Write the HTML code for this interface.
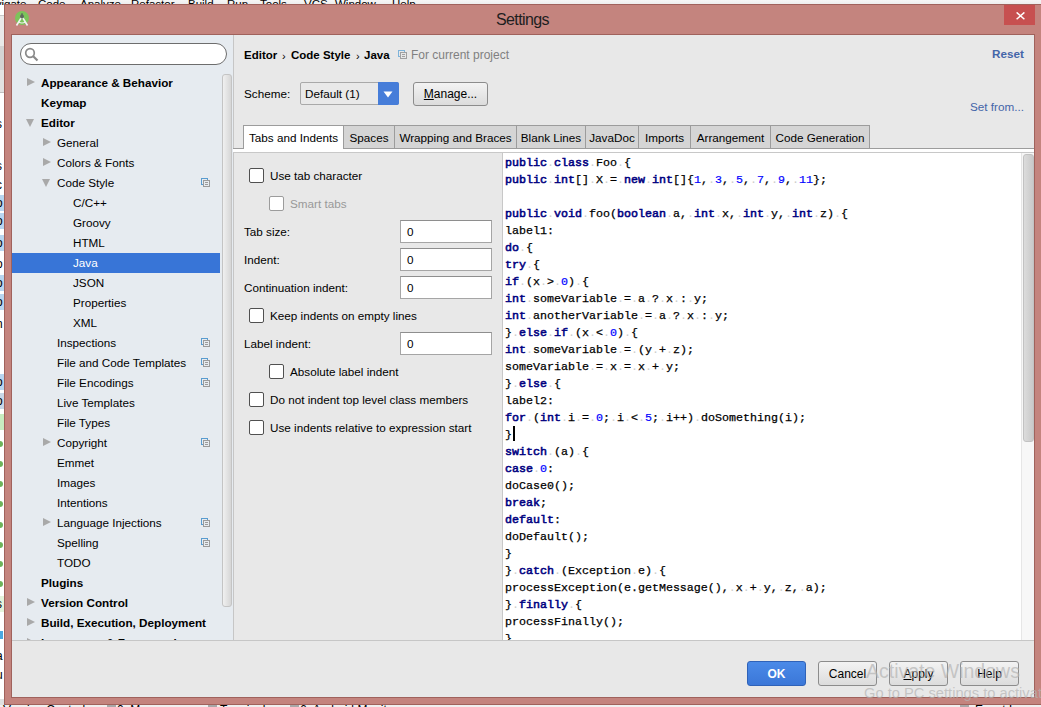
<!DOCTYPE html><html><head><meta charset="utf-8"><title>Settings</title><style>
*{margin:0;padding:0;box-sizing:border-box}
html,body{width:1041px;height:707px;overflow:hidden;background:#f0f0f0;font-family:"Liberation Sans",sans-serif;font-size:11.7px;color:#000}
.a{position:absolute;white-space:nowrap}
.tri-r{position:absolute;width:0;height:0;border-top:4.5px solid transparent;border-bottom:4.5px solid transparent;border-left:8px solid #a9a9a9}
.tri-d{position:absolute;width:0;height:0;border-left:4.5px solid transparent;border-right:4.5px solid transparent;border-top:8px solid #a9a9a9}
.row{position:absolute;height:20px;line-height:20px;white-space:nowrap}
.cb{position:absolute;width:15px;height:15px;border:1px solid #505050;border-radius:2px;background:#fff}
.cbd{border-color:#9c9c9c;background:#fff}
.tf{position:absolute;left:400px;width:92px;height:23px;border:1px solid #a5a5a5;border-top-color:#8e8e8e;background:#fff;padding-left:6px;line-height:21px}
.tab{position:absolute;top:125px;height:24px;border:1px solid #9c9c9c;border-bottom:none;background:#d5d5d5;line-height:23px;text-align:center}
.btn{position:absolute;top:661px;width:59px;height:25px;border:1px solid #8c8c8c;border-radius:3px;background:linear-gradient(#f3f3f3,#dcdcdc);text-align:center;line-height:24px;font-size:12px}
pre{position:absolute;font-family:"Liberation Mono",monospace;font-size:11.67px;line-height:17px;color:#000;-webkit-text-stroke:0.25px #000}
.k{color:#000080;font-weight:normal;-webkit-text-stroke:0.55px #000080}
.n{color:#0000ff;-webkit-text-stroke:0.2px #0000ff}
.w{color:#cccccc;font-weight:normal;-webkit-text-stroke:0}
.ic{position:absolute;width:10px;height:10px}
</style></head><body>
<div class="a" style="left:0;top:0;width:1041px;height:6px;background:linear-gradient(#f6f6f6,#e9e9e9)"></div>
<div class="a" style="left:-19px;top:-2px;font-size:11.5px">Navigate</div>
<div class="a" style="left:38px;top:-2px;font-size:11.5px">Code</div>
<div class="a" style="left:80px;top:-2px;font-size:11.5px">Analyze</div>
<div class="a" style="left:131px;top:-2px;font-size:11.5px">Refactor</div>
<div class="a" style="left:188px;top:-2px;font-size:11.5px">Build</div>
<div class="a" style="left:227px;top:-2px;font-size:11.5px">Run</div>
<div class="a" style="left:260px;top:-2px;font-size:11.5px">Tools</div>
<div class="a" style="left:304px;top:-2px;font-size:11.5px">VCS</div>
<div class="a" style="left:335px;top:-2px;font-size:11.5px">Window</div>
<div class="a" style="left:392px;top:-2px;font-size:11.5px">Help</div>
<div class="a" style="left:0;top:5px;width:5px;height:700px;background:#fff"></div>
<div class="a" style="left:0;top:15px;width:5px;height:1px;background:#c8c8c8"></div>
<div class="a" style="left:0;top:16px;width:5px;height:30px;background:#e9e9e9"></div>
<div class="a" style="left:0;top:46px;width:5px;height:24px;background:#d4d4d4"></div>
<div class="a" style="left:0;top:70px;width:5px;height:22px;background:#e2e2e2"></div>
<div class="a" style="left:0;top:92px;width:5px;height:1px;background:#c0c0c0"></div>
<div class="a" style="left:-4px;top:116px;font-size:12px;line-height:16px">s</div>
<div class="a" style="left:-4px;top:158px;font-size:12px;line-height:16px">s</div>
<div class="a" style="left:-4px;top:177px;font-size:12px;line-height:16px">c</div>
<div class="a" style="left:0;top:195px;width:5px;height:16px;background:#b8d6f0"></div>
<div class="a" style="left:-4px;top:195px;font-size:12px;line-height:16px">o</div>
<div class="a" style="left:0;top:213px;width:5px;height:16px;background:#b8d6f0"></div>
<div class="a" style="left:-4px;top:213px;font-size:12px;line-height:16px">o</div>
<div class="a" style="left:0;top:235px;width:5px;height:16px;background:#b8d6f0"></div>
<div class="a" style="left:-4px;top:235px;font-size:12px;line-height:16px">o</div>
<div class="a" style="left:-4px;top:256px;font-size:12px;line-height:16px">o</div>
<div class="a" style="left:0;top:275px;width:5px;height:16px;background:#b8d6f0"></div>
<div class="a" style="left:-4px;top:275px;font-size:12px;line-height:16px">o</div>
<div class="a" style="left:0;top:294px;width:5px;height:16px;background:#b8d6f0"></div>
<div class="a" style="left:-4px;top:294px;font-size:12px;line-height:16px">o</div>
<div class="a" style="left:-4px;top:316px;font-size:12px;line-height:16px">n</div>
<div class="a" style="left:-4px;top:335px;font-size:12px;line-height:16px">t</div>
<div class="a" style="left:-4px;top:355px;font-size:12px;line-height:16px">i</div>
<div class="a" style="left:0;top:374px;width:5px;height:16px;background:#b8d6f0"></div>
<div class="a" style="left:-4px;top:374px;font-size:12px;line-height:16px">o</div>
<div class="a" style="left:0;top:393px;width:5px;height:16px;background:#c8d8e8"></div>
<div class="a" style="left:-4px;top:393px;font-size:12px;line-height:16px">o</div>
<div class="a" style="left:0;top:414px;width:5px;height:16px;background:#c8ecc0"></div>
<div class="a" style="left:-4px;top:414px;font-size:12px;line-height:16px">I</div>
<div class="a" style="left:0;top:596px;width:5px;height:16px;background:#e4f4dc"></div>
<div class="a" style="left:-4px;top:596px;font-size:12px;line-height:16px">s</div>
<div class="a" style="left:-4px;top:648px;font-size:12px;line-height:16px">a</div>
<div class="a" style="left:-4px;top:667px;font-size:12px;line-height:16px">u</div>
<div class="a" style="left:0;top:441px;width:3px;height:6px;background:#6cb35a;border-radius:0 3px 3px 0"></div>
<div class="a" style="left:0;top:461px;width:3px;height:6px;background:#6cb35a;border-radius:0 3px 3px 0"></div>
<div class="a" style="left:0;top:481px;width:3px;height:6px;background:#6cb35a;border-radius:0 3px 3px 0"></div>
<div class="a" style="left:0;top:501px;width:3px;height:6px;background:#6cb35a;border-radius:0 3px 3px 0"></div>
<div class="a" style="left:0;top:522px;width:3px;height:6px;background:#6cb35a;border-radius:0 3px 3px 0"></div>
<div class="a" style="left:0;top:542px;width:3px;height:6px;background:#6cb35a;border-radius:0 3px 3px 0"></div>
<div class="a" style="left:0;top:561px;width:3px;height:6px;background:#6cb35a;border-radius:0 3px 3px 0"></div>
<div class="a" style="left:0;top:581px;width:3px;height:6px;background:#6cb35a;border-radius:0 3px 3px 0"></div>
<div class="a" style="left:0;top:631px;width:3px;height:8px;background:#4aa8e0"></div>
<div class="a" style="left:0;top:699px;width:5px;height:8px;background:#e0e0e0"></div>
<div class="a" style="left:0;top:705px;width:1041px;height:2px;background:#f0f0f0"></div>
<div class="a" style="left:3px;top:703px;font-size:12px;line-height:14px">Version Control</div>
<div class="a" style="left:117px;top:703px;font-size:12px;line-height:14px">0: Messages</div>
<div class="a" style="left:220px;top:703px;font-size:12px;line-height:14px">Terminal</div>
<div class="a" style="left:300px;top:703px;font-size:12px;line-height:14px">6: Android Monitor</div>
<div class="a" style="left:975px;top:703px;font-size:12px;line-height:14px">Event Log</div>
<div class="a" style="left:107px;top:705px;width:9px;height:2px;background:#a8a8a8"></div>
<div class="a" style="left:208px;top:705px;width:9px;height:2px;background:#a8a8a8"></div>
<div class="a" style="left:290px;top:705px;width:9px;height:2px;background:#a8a8a8"></div>
<div class="a" style="left:960px;top:705px;width:9px;height:2px;background:#a8a8a8"></div>
<div class="a" style="left:4px;top:4px;width:1042px;height:701px;background:#c4847e;border:1px solid #a0625c"></div>
<div class="a" style="left:496px;top:11px;font-size:16px;letter-spacing:-0.6px;color:#1e1e1e">Settings</div>
<svg class="a" style="left:14px;top:9px" width="16" height="18" viewBox="0 0 16 18">
<circle cx="8" cy="9" r="7" fill="#7cc35a"/>
<path d="M2.5 16.5 L8 7.5 L13.5 16.5" stroke="#f2f2f2" stroke-width="1.6" fill="none"/>
<path d="M4.6 13 Q8 15 11.4 13" stroke="#f2f2f2" stroke-width="1.2" fill="none"/>
<circle cx="8" cy="7.6" r="2" fill="#5d6a5d"/>
<rect x="7.2" y="4.3" width="1.6" height="2.2" fill="#5d6a5d"/>
</svg>
<div class="a" style="left:1004px;top:5px;width:31px;height:20px;background:#c75050"></div>
<svg class="a" style="left:1016px;top:12px" width="9" height="8" viewBox="0 0 9 8"><path d="M0.6 0.4 L8.4 7.2 M8.4 0.4 L0.6 7.2" stroke="#fff" stroke-width="1.5"/></svg>
<div class="a" style="left:11px;top:34px;width:1024px;height:664px;border:1px solid #a0625c;background:#e8e8e8"></div>
<div class="a" style="left:12px;top:35px;width:222px;height:606px;background:#e6ebf0;border-right:1px solid #c6c6c6;overflow:hidden">
<div class="a" style="left:8px;top:8px;width:207px;height:22px;border:1px solid #6d6d6d;border-radius:11px;background:#fff"></div>
<svg class="a" style="left:12px;top:12px" width="16" height="16" viewBox="0 0 16 16"><circle cx="6" cy="6" r="4.3" stroke="#8a8a8a" stroke-width="1.7" fill="none"/><path d="M9 9 L13.5 13.5" stroke="#8a8a8a" stroke-width="2.2"/></svg>
<div class="tri-r" style="left:15px;top:43px"></div>
<div class="row" style="left:29px;top:38px;font-weight:bold;color:#000">Appearance &amp; Behavior</div>
<div class="row" style="left:29px;top:58px;font-weight:bold;color:#000">Keymap</div>
<div class="tri-d" style="left:14px;top:84px"></div>
<div class="row" style="left:29px;top:78px;font-weight:bold;color:#000">Editor</div>
<div class="tri-r" style="left:31px;top:103px"></div>
<div class="row" style="left:45px;top:98px;font-weight:normal;color:#000">General</div>
<div class="tri-r" style="left:31px;top:123px"></div>
<div class="row" style="left:45px;top:118px;font-weight:normal;color:#000">Colors &amp; Fonts</div>
<div class="tri-d" style="left:30px;top:144px"></div>
<div class="row" style="left:45px;top:138px;font-weight:normal;color:#000">Code Style</div>
<svg class="a" style="left:189px;top:143px" width="10" height="10" viewBox="0 0 10 10"><rect x="0.5" y="0.5" width="6" height="6" fill="none" stroke="#5a9ccf" stroke-width="1"/><rect x="2.5" y="2.5" width="6" height="6" fill="#e6ebf0" stroke="#9a9a9a" stroke-width="1"/><path d="M4 4.5 H7 M4 6.5 H7" stroke="#9a9a9a" stroke-width="1"/></svg>
<div class="row" style="left:61px;top:158px;font-weight:normal;color:#000">C/C++</div>
<div class="row" style="left:61px;top:178px;font-weight:normal;color:#000">Groovy</div>
<div class="row" style="left:61px;top:198px;font-weight:normal;color:#000">HTML</div>
<div class="a" style="left:0px;top:218px;width:208px;height:20px;background:#3875d7"></div>
<div class="row" style="left:61px;top:218px;font-weight:normal;color:#fff">Java</div>
<div class="row" style="left:61px;top:238px;font-weight:normal;color:#000">JSON</div>
<div class="row" style="left:61px;top:258px;font-weight:normal;color:#000">Properties</div>
<div class="row" style="left:61px;top:278px;font-weight:normal;color:#000">XML</div>
<div class="row" style="left:45px;top:298px;font-weight:normal;color:#000">Inspections</div>
<svg class="a" style="left:189px;top:303px" width="10" height="10" viewBox="0 0 10 10"><rect x="0.5" y="0.5" width="6" height="6" fill="none" stroke="#5a9ccf" stroke-width="1"/><rect x="2.5" y="2.5" width="6" height="6" fill="#e6ebf0" stroke="#9a9a9a" stroke-width="1"/><path d="M4 4.5 H7 M4 6.5 H7" stroke="#9a9a9a" stroke-width="1"/></svg>
<div class="row" style="left:45px;top:318px;font-weight:normal;color:#000">File and Code Templates</div>
<svg class="a" style="left:189px;top:323px" width="10" height="10" viewBox="0 0 10 10"><rect x="0.5" y="0.5" width="6" height="6" fill="none" stroke="#5a9ccf" stroke-width="1"/><rect x="2.5" y="2.5" width="6" height="6" fill="#e6ebf0" stroke="#9a9a9a" stroke-width="1"/><path d="M4 4.5 H7 M4 6.5 H7" stroke="#9a9a9a" stroke-width="1"/></svg>
<div class="row" style="left:45px;top:338px;font-weight:normal;color:#000">File Encodings</div>
<svg class="a" style="left:189px;top:343px" width="10" height="10" viewBox="0 0 10 10"><rect x="0.5" y="0.5" width="6" height="6" fill="none" stroke="#5a9ccf" stroke-width="1"/><rect x="2.5" y="2.5" width="6" height="6" fill="#e6ebf0" stroke="#9a9a9a" stroke-width="1"/><path d="M4 4.5 H7 M4 6.5 H7" stroke="#9a9a9a" stroke-width="1"/></svg>
<div class="row" style="left:45px;top:358px;font-weight:normal;color:#000">Live Templates</div>
<div class="row" style="left:45px;top:378px;font-weight:normal;color:#000">File Types</div>
<div class="tri-r" style="left:31px;top:403px"></div>
<div class="row" style="left:45px;top:398px;font-weight:normal;color:#000">Copyright</div>
<svg class="a" style="left:189px;top:403px" width="10" height="10" viewBox="0 0 10 10"><rect x="0.5" y="0.5" width="6" height="6" fill="none" stroke="#5a9ccf" stroke-width="1"/><rect x="2.5" y="2.5" width="6" height="6" fill="#e6ebf0" stroke="#9a9a9a" stroke-width="1"/><path d="M4 4.5 H7 M4 6.5 H7" stroke="#9a9a9a" stroke-width="1"/></svg>
<div class="row" style="left:45px;top:418px;font-weight:normal;color:#000">Emmet</div>
<div class="row" style="left:45px;top:438px;font-weight:normal;color:#000">Images</div>
<div class="row" style="left:45px;top:458px;font-weight:normal;color:#000">Intentions</div>
<div class="tri-r" style="left:31px;top:483px"></div>
<div class="row" style="left:45px;top:478px;font-weight:normal;color:#000">Language Injections</div>
<svg class="a" style="left:189px;top:483px" width="10" height="10" viewBox="0 0 10 10"><rect x="0.5" y="0.5" width="6" height="6" fill="none" stroke="#5a9ccf" stroke-width="1"/><rect x="2.5" y="2.5" width="6" height="6" fill="#e6ebf0" stroke="#9a9a9a" stroke-width="1"/><path d="M4 4.5 H7 M4 6.5 H7" stroke="#9a9a9a" stroke-width="1"/></svg>
<div class="row" style="left:45px;top:498px;font-weight:normal;color:#000">Spelling</div>
<svg class="a" style="left:189px;top:503px" width="10" height="10" viewBox="0 0 10 10"><rect x="0.5" y="0.5" width="6" height="6" fill="none" stroke="#5a9ccf" stroke-width="1"/><rect x="2.5" y="2.5" width="6" height="6" fill="#e6ebf0" stroke="#9a9a9a" stroke-width="1"/><path d="M4 4.5 H7 M4 6.5 H7" stroke="#9a9a9a" stroke-width="1"/></svg>
<div class="row" style="left:45px;top:518px;font-weight:normal;color:#000">TODO</div>
<div class="row" style="left:29px;top:538px;font-weight:bold;color:#000">Plugins</div>
<div class="tri-r" style="left:15px;top:563px"></div>
<div class="row" style="left:29px;top:558px;font-weight:bold;color:#000">Version Control</div>
<div class="tri-r" style="left:15px;top:583px"></div>
<div class="row" style="left:29px;top:578px;font-weight:bold;color:#000">Build, Execution, Deployment</div>
<div class="tri-r" style="left:15px;top:603px"></div>
<div class="row" style="left:29px;top:598px;font-weight:bold;color:#000">Languages &amp; Frameworks</div>
<div class="a" style="left:210px;top:39px;width:10px;height:533px;border:1px solid #c4c4c4;border-radius:3px;background:linear-gradient(90deg,#f0f0f0,#d6d6d6)"></div>
</div>
<div class="a" style="left:12px;top:640px;width:1022px;height:1px;background:#c6c6c6"></div>
<div class="a" style="left:244px;top:48.5px;font-weight:bold;font-size:11.5px">Editor</div>
<div class="a" style="left:282px;top:50px;font-size:11px">›</div>
<div class="a" style="left:291px;top:48.5px;font-weight:bold;font-size:11.5px">Code Style</div>
<div class="a" style="left:356px;top:50px;font-size:11px">›</div>
<div class="a" style="left:364px;top:48.5px;font-weight:bold;font-size:11.5px">Java</div>
<svg class="a" style="left:398px;top:50px" width="10" height="10" viewBox="0 0 10 10"><rect x="0.5" y="0.5" width="6" height="6" fill="none" stroke="#7db3da" stroke-width="1"/><rect x="2.5" y="2.5" width="6" height="6" fill="#e8e8e8" stroke="#a0a0a0" stroke-width="1"/><path d="M4 4.5 H7 M4 6.5 H7" stroke="#a0a0a0" stroke-width="1"/></svg>
<div class="a" style="left:411px;top:48px;color:#808080;font-size:12px">For current project</div>
<div class="a" style="left:992px;top:47px;color:#4465a8;font-weight:bold;font-size:11.7px">Reset</div>
<div class="a" style="left:970px;top:100px;color:#4465a8;font-size:11.7px">Set from...</div>
<div class="a" style="left:244px;top:87px">Scheme:</div>
<div class="a" style="left:300px;top:82px;width:99px;height:23px;border:1px solid #a9a9a9;border-radius:2px;background:#e9e9e9;"></div>
<div class="a" style="left:305px;top:87px">Default (1)</div>
<div class="a" style="left:378px;top:82px;width:21px;height:23px;background:#467dd9;border-radius:0 2px 2px 0"></div>
<svg class="a" style="left:383px;top:91px" width="10" height="7" viewBox="0 0 10 7"><path d="M0.5 0.5 H9.5 L5 6.5 Z" fill="#fff"/></svg>
<div class="btn" style="left:413px;top:82px;width:75px;height:24px;line-height:22px"><u>M</u>anage...</div>
<div class="a" style="left:233px;top:148px;width:801px;height:1px;background:#9c9c9c"></div>
<div class="a" style="left:233px;top:149px;width:801px;height:3px;background:#fff"></div>
<div class="a" style="left:233px;top:152px;width:801px;height:1px;background:#c8c8c8"></div>
<div class="tab" style="left:243px;width:101px;height:24px;background:#fff">Tabs and Indents</div>
<div class="tab" style="left:343px;width:52px;height:23px;background:#d5d5d5">Spaces</div>
<div class="tab" style="left:394px;width:123px;height:23px;background:#d5d5d5">Wrapping and Braces</div>
<div class="tab" style="left:516px;width:70px;height:23px;background:#d5d5d5">Blank Lines</div>
<div class="tab" style="left:585px;width:54px;height:23px;background:#d5d5d5">JavaDoc</div>
<div class="tab" style="left:638px;width:53px;height:23px;background:#d5d5d5">Imports</div>
<div class="tab" style="left:690px;width:81px;height:23px;background:#d5d5d5">Arrangement</div>
<div class="tab" style="left:770px;width:100px;height:23px;background:#d5d5d5">Code Generation</div>
<div class="cb" style="left:249px;top:168px"></div>
<div class="a" style="left:270px;top:168px;line-height:15px;color:#000">Use tab character</div>
<div class="cb cbd" style="left:269px;top:196px"></div>
<div class="a" style="left:290px;top:196px;line-height:15px;color:#999">Smart tabs</div>
<div class="a" style="left:244px;top:224px;line-height:15px">Tab size:</div>
<div class="tf" style="top:220px">0</div>
<div class="a" style="left:244px;top:252px;line-height:15px">Indent:</div>
<div class="tf" style="top:248px">0</div>
<div class="a" style="left:244px;top:280px;line-height:15px">Continuation indent:</div>
<div class="tf" style="top:276px">0</div>
<div class="cb" style="left:249px;top:308px"></div>
<div class="a" style="left:270px;top:308px;line-height:15px;color:#000">Keep indents on empty lines</div>
<div class="a" style="left:244px;top:336px;line-height:15px">Label indent:</div>
<div class="tf" style="top:332px">0</div>
<div class="cb" style="left:269px;top:364px"></div>
<div class="a" style="left:290px;top:364px;line-height:15px;color:#000">Absolute label indent</div>
<div class="cb" style="left:249px;top:392px"></div>
<div class="a" style="left:270px;top:392px;line-height:15px;color:#000">Do not indent top level class members</div>
<div class="cb" style="left:249px;top:420px"></div>
<div class="a" style="left:270px;top:420px;line-height:15px;color:#000">Use indents relative to expression start</div>
<div class="a" style="left:502px;top:153px;width:532px;height:487px;background:#fff;border-left:1px solid #c8c8c8;overflow:hidden">
<pre style="left:2px;top:2px"><span class="k">public<b class="w">.</b>class</span><b class="w">.</b>Foo<b class="w">.</b>{
<span class="k">public<b class="w">.</b>int</span>[]<b class="w">.</b>X<b class="w">.</b>=<b class="w">.</b><span class="k">new<b class="w">.</b>int</span>[]{<span class="n">1</span>,<b class="w">.</b><span class="n">3</span>,<b class="w">.</b><span class="n">5</span>,<b class="w">.</b><span class="n">7</span>,<b class="w">.</b><span class="n">9</span>,<b class="w">.</b><span class="n">11</span>};

<span class="k">public<b class="w">.</b>void</span><b class="w">.</b>foo(<span class="k">boolean</span><b class="w">.</b>a,<b class="w">.</b><span class="k">int</span><b class="w">.</b>x,<b class="w">.</b><span class="k">int</span><b class="w">.</b>y,<b class="w">.</b><span class="k">int</span><b class="w">.</b>z)<b class="w">.</b>{
label1:
<span class="k">do</span><b class="w">.</b>{
<span class="k">try</span><b class="w">.</b>{
<span class="k">if</span><b class="w">.</b>(x<b class="w">.</b>&gt;<b class="w">.</b><span class="n">0</span>)<b class="w">.</b>{
<span class="k">int</span><b class="w">.</b>someVariable<b class="w">.</b>=<b class="w">.</b>a<b class="w">.</b>?<b class="w">.</b>x<b class="w">.</b>:<b class="w">.</b>y;
<span class="k">int</span><b class="w">.</b>anotherVariable<b class="w">.</b>=<b class="w">.</b>a<b class="w">.</b>?<b class="w">.</b>x<b class="w">.</b>:<b class="w">.</b>y;
}<b class="w">.</b><span class="k">else<b class="w">.</b>if</span><b class="w">.</b>(x<b class="w">.</b>&lt;<b class="w">.</b><span class="n">0</span>)<b class="w">.</b>{
<span class="k">int</span><b class="w">.</b>someVariable<b class="w">.</b>=<b class="w">.</b>(y<b class="w">.</b>+<b class="w">.</b>z);
someVariable<b class="w">.</b>=<b class="w">.</b>x<b class="w">.</b>=<b class="w">.</b>x<b class="w">.</b>+<b class="w">.</b>y;
}<b class="w">.</b><span class="k">else</span><b class="w">.</b>{
label2:
<span class="k">for</span><b class="w">.</b>(<span class="k">int</span><b class="w">.</b>i<b class="w">.</b>=<b class="w">.</b><span class="n">0</span>;<b class="w">.</b>i<b class="w">.</b>&lt;<b class="w">.</b><span class="n">5</span>;<b class="w">.</b>i++)<b class="w">.</b>doSomething(i);
}
<span class="k">switch</span><b class="w">.</b>(a)<b class="w">.</b>{
<span class="k">case</span><b class="w">.</b><span class="n">0</span>:
doCase0();
<span class="k">break</span>;
<span class="k">default</span>:
doDefault();
}
}<b class="w">.</b><span class="k">catch</span><b class="w">.</b>(Exception<b class="w">.</b>e)<b class="w">.</b>{
processException(e.getMessage(),<b class="w">.</b>x<b class="w">.</b>+<b class="w">.</b>y,<b class="w">.</b>z,<b class="w">.</b>a);
}<b class="w">.</b><span class="k">finally</span><b class="w">.</b>{
processFinally();
}</pre>
<div class="a" style="left:10px;top:273px;width:2px;height:15px;background:#000"></div>
<div class="a" style="left:518px;top:0px;width:14px;height:487px;background:#f7f7f7;border-left:1px solid #e6e6e6"></div>
<div class="a" style="left:520px;top:1px;width:11px;height:288px;border:1px solid #c2c2c2;border-radius:3px;background:linear-gradient(90deg,#dcdcdc,#c9c9c9)"></div>
</div>
<div class="btn" style="left:747px;background:linear-gradient(#4a8ae8,#3b77d8);border-color:#2f62b8;color:#fff;font-weight:bold">OK</div>
<div class="btn" style="left:818px">Cancel</div>
<div class="btn" style="left:889px"><u>A</u>pply</div>
<div class="btn" style="left:960px">Help</div>
<div class="a" style="left:866px;top:660px;font-size:19.5px;color:rgba(180,180,180,0.7)">Activate Windows</div>
<div class="a" style="left:864px;top:685px;font-size:14.7px;color:rgba(180,180,180,0.7)">Go to PC settings to activate Windows.</div>
</body></html>
